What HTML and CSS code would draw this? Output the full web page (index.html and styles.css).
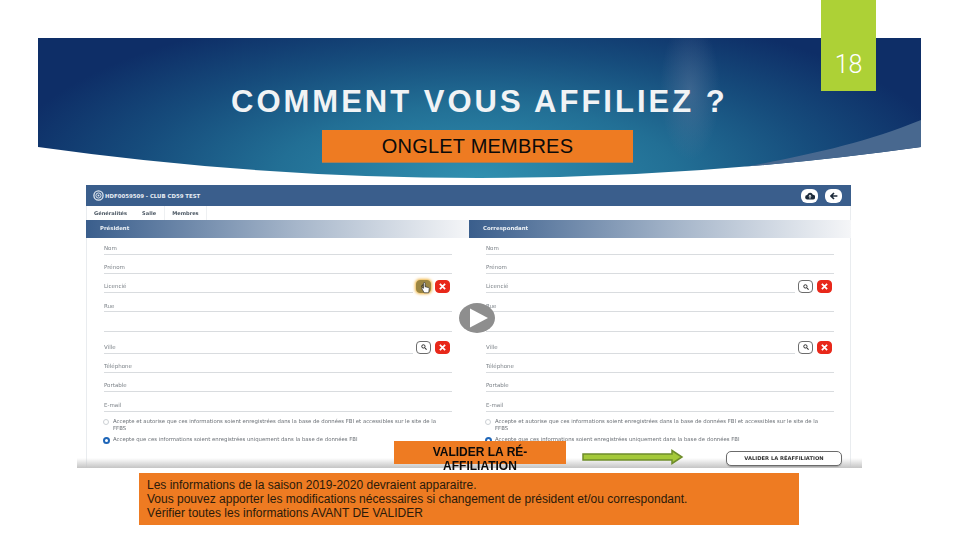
FILE: index.html
```html
<!DOCTYPE html>
<html lang="fr">
<head>
<meta charset="utf-8">
<title>Comment vous affiliez ?</title>
<link rel="stylesheet" href="styles.css">
</head>
<body>
<main class="slide">
  <div class="banner">
    <svg class="swoosh" viewBox="0 0 883 140" width="883" height="140"><path d="M883 82C810 112 740 122 650 140L883 140Z" fill="#48688f"/></svg>
  </div>
  <div class="tab">18</div>
  <h1 class="title">COMMENT VOUS AFFILIEZ ?</h1>
  <div class="tag">ONGLET MEMBRES</div>

  <section class="shot">
    <div class="app">
      <header class="app-head">
        <div class="brand">
          <svg width="11" height="11" viewBox="0 0 11 11"><circle cx="5.500" cy="5.500" r="4.600" fill="none" stroke="#dfe6ef" stroke-width="1.300"/><circle cx="5.500" cy="5.500" r="2.600" fill="none" stroke="#dfe6ef" stroke-width="1"/><circle cx="5.500" cy="5.500" r="1" fill="#dfe6ef"/></svg>
          <span>HDF0059509 - CLUB CD59 TEST</span>
        </div>
        <div class="head-actions">
          <span class="pill"><svg width="10" height="8" viewBox="0 0 10 8"><path d="M2.5 7.5a2.2 2.2 0 0 1-.3-4.4 3 3 0 0 1 5.7-.4 2.4 2.4 0 0 1-.2 4.8Z" fill="#1c2a3a"/><path d="M5 2.6 3.4 4.4h3.2ZM4.5 4.2h1v2.2h-1Z" fill="#fff"/></svg></span>
          <span class="pill"><svg width="8" height="8" viewBox="0 0 8 8"><path d="M7.4 4H1.4M4 1 1 4l3 3" fill="none" stroke="#1c2a3a" stroke-width="1.6"/></svg></span>
        </div>
      </header>
      <nav class="tabs"><span>Généralités</span><span>Salle</span><span class="on">Membres</span></nav>
      <div class="cols">
        <div class="col">
          <h2 class="sec sec-l">Président</h2>
          <div class="fields fields-l">
            <div class="field">Nom</div>
            <div class="field">Prénom</div>
            <div class="field-row">
              <div class="field grow">Licencié</div>
              <span class="btn hot"><svg width="6" height="6" viewBox="0 0 8 8"><circle cx="3.2" cy="3.2" r="2.2" fill="none" stroke="#2a2a2a" stroke-width="1.3"/><path d="m5 5 2.4 2.4" stroke="#2a2a2a" stroke-width="1.4"/></svg></span>
              <span class="btn del"><svg width="7" height="7" viewBox="0 0 8 8"><path d="m1 1 6 6M7 1 1 7" stroke="#fff" stroke-width="2"/></svg></span>
            </div>
            <div class="field">Rue</div>
            <div class="field"></div>
            <div class="field-row tall">
              <div class="field grow">Ville</div>
              <span class="btn"><svg width="6" height="6" viewBox="0 0 8 8"><circle cx="3.2" cy="3.2" r="2.2" fill="none" stroke="#2a2a2a" stroke-width="1.3"/><path d="m5 5 2.4 2.4" stroke="#2a2a2a" stroke-width="1.4"/></svg></span>
              <span class="btn del"><svg width="7" height="7" viewBox="0 0 8 8"><path d="m1 1 6 6M7 1 1 7" stroke="#fff" stroke-width="2"/></svg></span>
            </div>
            <div class="field">Téléphone</div>
            <div class="field">Portable</div>
            <div class="field">E-mail</div>
            <div class="radios">
              <div class="radio"><i class="dot"></i><p>Accepte et autorise que ces informations soient enregistrées dans la base de données FBI et accessibles sur le site de la FFBS</p></div>
              <div class="radio"><i class="dot sel"></i><p>Accepte que ces informations soient enregistrées uniquement dans la base de données FBI</p></div>
            </div>
          </div>
        </div>
        <div class="col">
          <h2 class="sec">Correspondant</h2>
          <div class="fields">
            <div class="field">Nom</div>
            <div class="field">Prénom</div>
            <div class="field-row">
              <div class="field grow">Licencié</div>
              <span class="btn"><svg width="6" height="6" viewBox="0 0 8 8"><circle cx="3.2" cy="3.2" r="2.2" fill="none" stroke="#2a2a2a" stroke-width="1.3"/><path d="m5 5 2.4 2.4" stroke="#2a2a2a" stroke-width="1.4"/></svg></span>
              <span class="btn del"><svg width="7" height="7" viewBox="0 0 8 8"><path d="m1 1 6 6M7 1 1 7" stroke="#fff" stroke-width="2"/></svg></span>
            </div>
            <div class="field">Rue</div>
            <div class="field"></div>
            <div class="field-row tall">
              <div class="field grow">Ville</div>
              <span class="btn"><svg width="6" height="6" viewBox="0 0 8 8"><circle cx="3.2" cy="3.2" r="2.2" fill="none" stroke="#2a2a2a" stroke-width="1.3"/><path d="m5 5 2.4 2.4" stroke="#2a2a2a" stroke-width="1.4"/></svg></span>
              <span class="btn del"><svg width="7" height="7" viewBox="0 0 8 8"><path d="m1 1 6 6M7 1 1 7" stroke="#fff" stroke-width="2"/></svg></span>
            </div>
            <div class="field">Téléphone</div>
            <div class="field">Portable</div>
            <div class="field">E-mail</div>
            <div class="radios">
              <div class="radio"><i class="dot"></i><p>Accepte et autorise que ces informations soient enregistrées dans la base de données FBI et accessibles sur le site de la FFBS</p></div>
              <div class="radio"><i class="dot sel"></i><p>Accepte que ces informations soient enregistrées uniquement dans la base de données FBI</p></div>
            </div>
          </div>
        </div>
      </div>
    </div>
    <div class="fade"></div>
    <span class="submit">VALIDER LA RÉAFFILIATION</span>
  </section>

  <svg class="cursor" width="9" height="12" viewBox="0 0 9 12"><path d="M2.6 1.2c0-1 1.500-1 1.500 0v3.500l3.200.8c.8.3 1 .8.9 1.500l-.5 3.800H3.200L1 7c-.6-1 .6-1.700 1.600-.7Z" fill="#fff" stroke="#333" stroke-width=".7"/></svg>
  <svg class="play" width="36" height="30" viewBox="0 0 36 30"><ellipse cx="18" cy="15" rx="18" ry="15" fill="#8e8e8e"/><path d="M11 5.500 29 15 11 24.500Z" fill="#fff"/></svg>

  <div class="validate">VALIDER LA RÉ-<br>AFFILIATION</div>
  <svg class="arrow" width="102" height="16" viewBox="0 0 102 16"><path d="M1 5h89V1.500L100 8 90 14.500V11H1Z" fill="#a4c93a" stroke="#6f8d2b" stroke-width="1.500"/></svg>
  <div class="info">
    <p>Les informations de la saison 2019-2020 devraient apparaitre.</p>
    <p>Vous pouvez apporter les modifications nécessaires si changement de président et/ou correspondant.</p>
    <p>Vérifier toutes les informations AVANT DE VALIDER</p>
  </div>
</main>
</body>
</html>
```

FILE: styles.css
```css
* { box-sizing: border-box; }
html, body { margin: 0; padding: 0; background: #fff; }
body { font-family: "Liberation Sans", Arial, sans-serif; }
h1, h2, p { margin: 0; font-weight: normal; }

.slide { position: relative; width: 960px; height: 540px; overflow: hidden; background: #fff; }

.banner {
  position: absolute; left: 38px; top: 38px; width: 883px; height: 140px;
  clip-path: path("M0 0H883V109Q441 171 0 109Z");
  background:
    radial-gradient(ellipse 30px 70px at 652px 52px, rgba(112,130,165,.4), rgba(112,130,165,0)),
    radial-gradient(ellipse 480px 175px at 440px 140px, #3090b0 0%, #226f95 42%, #164c7c 72%, #0e2e67 100%);
}
.swoosh { position: absolute; left: 0; top: 0; }

.tab {
  position: absolute; left: 821px; top: 0; width: 55px; height: 91px;
  padding-top: 50px; background: #add136; color: #fff;
  font-family: Roboto, "Liberation Sans", sans-serif; font-size: 25px; line-height: 30px; text-align: center; font-weight: 300;
}
.title {
  position: absolute; left: 231px; top: 84px; white-space: nowrap;
  font-size: 31px; line-height: 36px; font-weight: bold; letter-spacing: 3px; color: #f1f3f5;
}
.tag {
  position: absolute; left: 322px; top: 130px; width: 311px; height: 33px;
  background: #ee7b22; border-bottom: 1px solid #a87d55;
  font-size: 20px; line-height: 33px; text-align: center; color: #0a0a0a; letter-spacing: .2px;
}

.shot {
  position: absolute; left: 77px; top: 183px; width: 785px; height: 285px;
  background: #fff; padding: 2px 11px 0 9px; overflow: hidden;
}
.app { height: 283px; box-shadow: inset 1px 0 #e9ecef, inset -1px 0 #e9ecef; filter: blur(.35px); }
.app-head {
  display: flex; align-items: center; justify-content: space-between;
  height: 21px; background: #3a5e8c; padding: 0 9px 0 7px;
}
.brand { display: flex; align-items: center; gap: 1px; color: #e8edf3; font-size: 5.400px; font-weight: bold; font-family: "DejaVu Sans", sans-serif; }
.head-actions { display: flex; gap: 7px; }
.pill { display: flex; align-items: center; justify-content: center; width: 17px; height: 14px; background: #fff; border-radius: 6px; }
.tabs { display: flex; height: 14px; align-items: center; padding-left: 8px; font-size: 5.100px; font-weight: bold; color: #4a5662; font-family: "DejaVu Sans", sans-serif; }
.tabs span { padding-right: 15px; }
.tabs .on { height: 14px; line-height: 14px; margin-left: -7px; padding: 0 7px; border: 1px solid #eef0f2; border-width: 0 1px; }

.cols { display: grid; grid-template-columns: 383px 382px; }
.sec {
  height: 18px; padding-left: 14px; font-size: 5.400px; line-height: 17px; font-weight: bold; color: #eef2f6;
  font-family: "DejaVu Sans", sans-serif;
  background: linear-gradient(90deg, #3a5e8c 0%, #a6b6ca 55%, #f5f6f8 100%);
}
.fields { padding: 0 17px; }
.fields-l { padding-left: 18px; }

.field {
  height: 19.300px; border-bottom: 1px solid #d9dcdf; color: #7d8389;
  font-size: 5.500px; line-height: 7px; padding-top: 9.500px; font-family: "DejaVu Sans", sans-serif;
}
.field:first-child { height: 16.500px; padding-top: 7px; }
.field-row { display: flex; align-items: flex-end; height: 19.300px; gap: 3px; padding-right: 2px; }
.field-row .field { height: 19.300px; padding-top: 9.500px; }
.field-row.tall { height: 22px; }
.field-row.tall .field { height: 22px; padding-top: 12px; }
.grow { flex: 1; }
.btn {
  display: flex; align-items: center; justify-content: center; width: 15px; height: 13px;
  background: #fff; border: 1px solid #6d6d6d; border-radius: 4px;
}
.btn.del { background: #e8281a; border-color: #e8281a; margin-left: 1px; }
.btn.hot { background: #9c8642; border-color: #9c8642; box-shadow: 0 0 3px 1px #f0b440; }

.radios { padding-top: 6px; }
.radio { display: flex; gap: 4px; font-size: 5.350px; line-height: 7px; color: #6b7076; margin-bottom: 4px; margin-left: -1px; font-family: "DejaVu Sans", sans-serif; }
.radio p { width: 326px; }
.dot { flex: none; width: 6px; height: 6px; margin-top: 1px; border-radius: 50%; border: 1px solid #ccd0d4; background: #fff; }
.dot.sel { width: 7px; height: 7px; margin-right: -1px; border: 2.500px solid #1f66b8; background: #fff; }

.fade { position: absolute; left: 0; right: 0; bottom: 0; height: 10px; background: linear-gradient(180deg, rgba(200,200,200,0), #c4c4c4); }
.submit {
  position: absolute; left: 649px; top: 268px; width: 116px; height: 15px;
  background: #fff; border: 1px solid #6b6b6b; border-radius: 5px; box-shadow: 0 1px 1px rgba(0,0,0,.2);
  font-size: 5.200px; line-height: 13px; text-align: center; color: #333; font-weight: bold; font-family: "DejaVu Sans", sans-serif;
}

.cursor { position: absolute; left: 421px; top: 282px; }
.play { position: absolute; left: 459px; top: 303px; }

.validate {
  position: absolute; left: 394px; top: 441px; width: 172px; height: 23px; padding-top: 4px;
  background: #ee7b22; color: #0a0a0a; font-size: 12px; line-height: 14px; font-weight: bold; text-align: center;
}
.arrow { position: absolute; left: 582px; top: 449px; }
.info {
  position: absolute; left: 139px; top: 473px; width: 660px; height: 52px; padding: 6px 8px;
  background: #ee7b22; color: #2a1a0a; font-size: 12px; line-height: 13.800px;
}
```
